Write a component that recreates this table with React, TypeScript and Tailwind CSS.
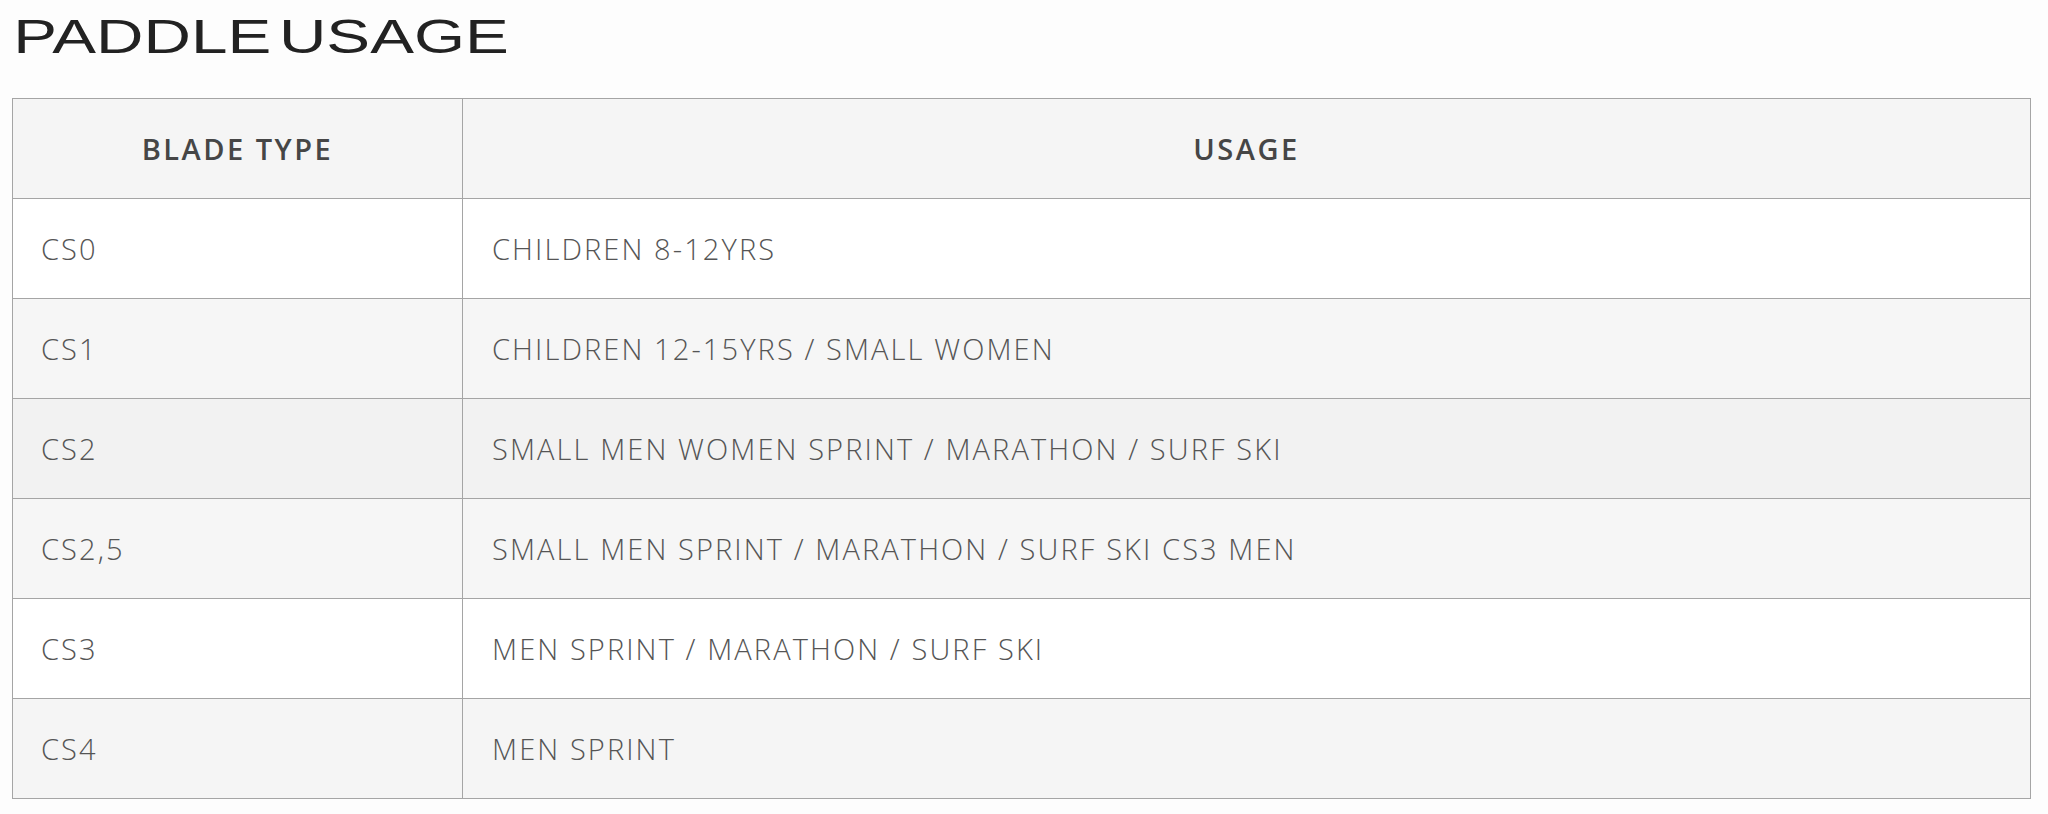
const rows = [
  { blade: "CS0", usage: "CHILDREN 8-12YRS", bg: "bg-white" },
  { blade: "CS1", usage: "CHILDREN 12-15YRS / SMALL WOMEN", bg: "bg-[#f6f6f6]" },
  { blade: "CS2", usage: "SMALL MEN WOMEN SPRINT / MARATHON / SURF SKI", bg: "bg-[#f2f2f2]" },
  { blade: "CS2,5", usage: "SMALL MEN SPRINT / MARATHON / SURF SKI CS3 MEN", bg: "bg-[#f6f6f6]" },
  { blade: "CS3", usage: "MEN SPRINT / MARATHON / SURF SKI", bg: "bg-white" },
  { blade: "CS4", usage: "MEN SPRINT", bg: "bg-[#f5f5f5]" },
];

const App = () => {
  return (
    <div className="min-h-screen bg-[#fdfdfd] pl-[12px] pr-[17px] pt-[12px] font-['Open_Sans',sans-serif]">
      <h1 className="h-[49px] text-[49px] leading-[49px] font-normal text-[#222222] font-['Liberation_Sans',sans-serif]">
        <span className="inline-block origin-left scale-x-[1.34] [word-spacing:-0.16em] pl-[1px]">
          PADDLE USAGE
        </span>
      </h1>
      <table className="mt-[37px] w-full table-fixed border-collapse border border-[#a5a5a5]">
        <thead>
          <tr className="bg-[#f5f5f5]">
            <th className="w-[450px] h-[100px] border border-[#a5a5a5] text-[29px] font-semibold text-[#464646] tracking-[2.5px]">
              BLADE TYPE
            </th>
            <th className="h-[100px] border border-[#a5a5a5] text-[29px] font-semibold text-[#464646] tracking-[2.5px]">
              USAGE
            </th>
          </tr>
        </thead>
        <tbody>
          {rows.map((row) => (
            <tr key={row.blade} className={row.bg}>
              <td className="h-[100px] border border-[#a5a5a5] pl-[28px] text-left text-[29px] font-light text-[#555555] tracking-[2.1px]">
                {row.blade}
              </td>
              <td className="h-[100px] border border-[#a5a5a5] pl-[29px] text-left text-[29px] font-light text-[#555555] tracking-[2.1px]">
                {row.usage}
              </td>
            </tr>
          ))}
        </tbody>
      </table>
    </div>
  );
};

export default App;
